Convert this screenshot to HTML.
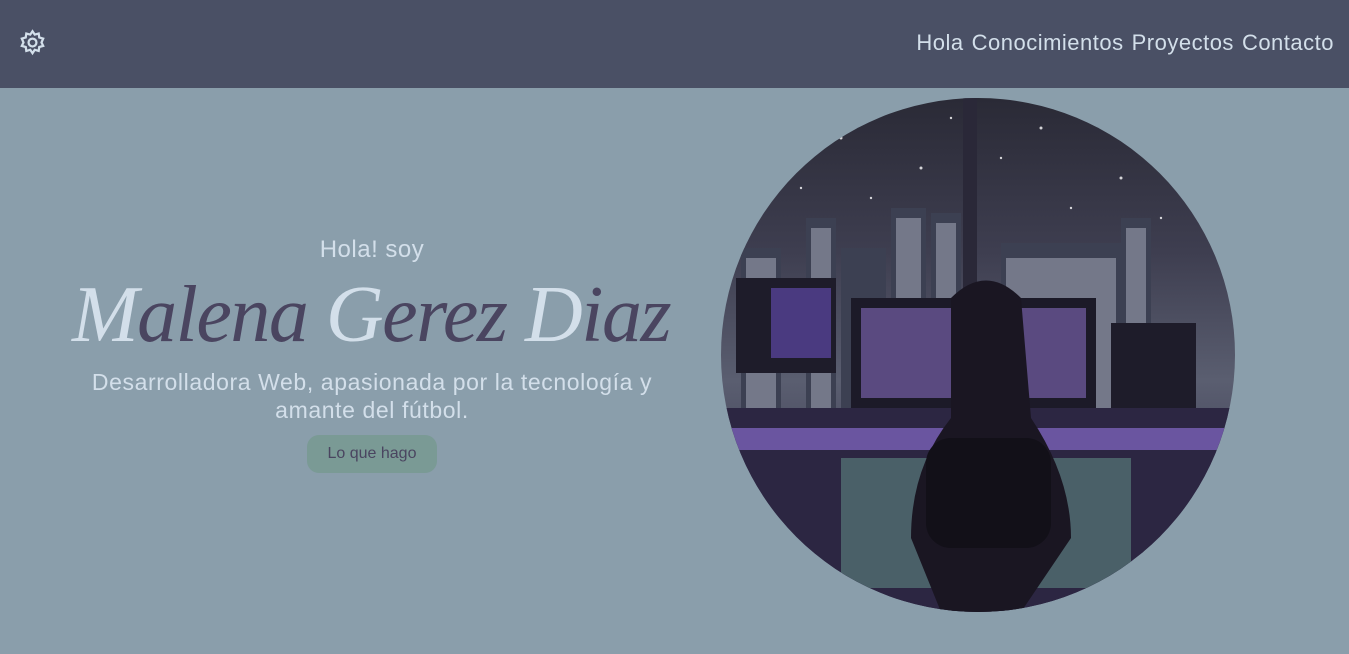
<!DOCTYPE html>
<html><head><meta charset="utf-8"><style>
*{margin:0;padding:0;box-sizing:border-box}
body{width:1349px;height:654px;overflow:hidden;background:#8a9eab;font-family:"Liberation Sans",sans-serif;position:relative}
nav{position:absolute;left:0;top:0;width:1349px;height:88px;background:#4a5065}
.links{position:absolute;right:15px;top:30px;font-size:22px;color:#d3dfea;letter-spacing:.5px}
.links span{margin-left:8px}
.gear{position:absolute;left:19px;top:29px}
.hola{position:absolute;left:0;width:744px;top:236px;text-align:center;color:#d3dfea;font-size:24px;letter-spacing:.5px}
.name{position:absolute;left:72px;top:270px;width:620px;font-family:"Liberation Serif",serif;font-style:italic;font-size:80px;color:#4a4560;white-space:nowrap;letter-spacing:-1.5px}
.name b{color:#d3dfea;font-weight:normal}
.desc{position:absolute;left:62px;width:620px;top:368px;text-align:center;color:#d3dfea;font-size:23px;line-height:28px;letter-spacing:.6px}
.btn{position:absolute;left:307px;top:435px;width:130px;height:38px;border-radius:12px;background:#7a9a95;color:#4a4560;font-size:16px;text-align:center;line-height:38px}
.img{position:absolute;left:721px;top:98px;width:514px;height:514px;border-radius:50%;overflow:hidden}
</style></head><body>
<nav>
<svg class="gear" width="27" height="27" viewBox="0 0 24 24" fill="none" stroke="#d3dfea" stroke-width="2"><path d="M12 2l2 3 3.5-1 .5 3.5 3.5 1-1.5 3.5 1.5 3-3.5 1-.5 3.5-3.5-1-2 3-2-3-3.5 1-.5-3.5-3.5-1 1.5-3-1.5-3.5 3.5-1 .5-3.5 3.5 1z"/><circle cx="12" cy="12" r="3.5"/></svg>
<div class="links"><span>Hola</span><span>Conocimientos</span><span>Proyectos</span><span>Contacto</span></div>
</nav>
<div class="hola">Hola! soy</div>
<div class="name"><b>M</b>alena <b>G</b>erez <b>D</b>iaz</div>
<div class="desc">Desarrolladora Web, apasionada por la tecnología y amante del fútbol.</div>
<div class="btn">Lo que hago</div>
<div class="img"><svg width="514" height="514" viewBox="0 0 514 514">
<defs><linearGradient id="s" x1="0" y1="0" x2="0" y2="1"><stop offset="0" stop-color="#2a2a36"/><stop offset=".3" stop-color="#3e3e50"/><stop offset=".55" stop-color="#5a5e70"/><stop offset="1" stop-color="#2a2440"/></linearGradient></defs>
<rect width="514" height="514" fill="url(#s)"/>
<g fill="#fff" opacity=".8"><circle cx="120" cy="40" r="1.5"/><circle cx="200" cy="70" r="1.5"/><circle cx="320" cy="30" r="1.5"/><circle cx="400" cy="80" r="1.5"/><circle cx="150" cy="100" r="1.2"/><circle cx="350" cy="110" r="1.2"/><circle cx="280" cy="60" r="1.2"/><circle cx="80" cy="90" r="1.2"/><circle cx="440" cy="120" r="1.2"/><circle cx="230" cy="20" r="1.2"/></g>
<g fill="#3c4052"><rect x="85" y="120" width="30" height="200"/><rect x="170" y="110" width="35" height="210"/><rect x="210" y="115" width="30" height="200"/><rect x="280" y="145" width="120" height="180"/><rect x="400" y="120" width="30" height="200"/><rect x="20" y="150" width="40" height="170"/><rect x="120" y="150" width="45" height="170"/></g>
<g fill="#b8bccc" opacity=".45"><rect x="90" y="130" width="20" height="180"/><rect x="175" y="120" width="25" height="190"/><rect x="285" y="160" width="110" height="150"/><rect x="405" y="130" width="20" height="180"/><rect x="25" y="160" width="30" height="150"/><rect x="215" y="125" width="20" height="180"/></g>
<rect x="242" y="0" width="14" height="310" fill="#2a2838"/>
<rect x="0" y="310" width="514" height="204" fill="#2c2642"/>
<rect x="130" y="200" width="245" height="110" fill="#1c1a28"/><rect x="140" y="210" width="225" height="90" fill="#5a4a80"/>
<rect x="15" y="180" width="100" height="95" fill="#1e1c2a"/><rect x="50" y="190" width="60" height="70" fill="#4a3a80"/>
<rect x="390" y="225" width="85" height="85" fill="#1e1c2a"/>
<rect x="0" y="330" width="514" height="22" fill="#6a55a0"/>
<rect x="120" y="360" width="290" height="130" fill="#4a6068"/>
<path d="M230 200 q35-35 70 0 l10 120 q40 60 40 120 l-50 74 h-80 l-30-74 q0-70 40-120z" fill="#1a1622"/>
<rect x="205" y="340" width="125" height="110" rx="25" fill="#121018"/>
</svg></div>
</body></html>
